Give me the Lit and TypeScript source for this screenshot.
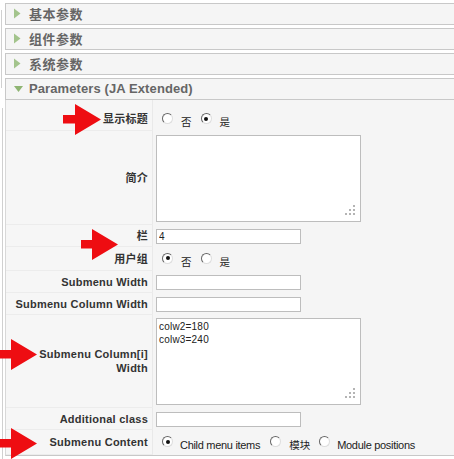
import { LitElement, html, css, svg } from "lit";
import { customElement } from "lit/decorators.js";

const grip = html`<svg class="grip" width="12" height="11" viewBox="0 0 12 11">
  <g fill="#b4b4b4">
    <rect x="9" y="0" width="2" height="2" />
    <rect x="5" y="4" width="2" height="2" />
    <rect x="9" y="4" width="2" height="2" />
    <rect x="1" y="8" width="2" height="2" />
    <rect x="5" y="8" width="2" height="2" />
    <rect x="9" y="8" width="2" height="2" />
  </g>
</svg>`;

const arrows = [
  { x: 63, y: 104, w: 38 },
  { x: 81, y: 229, w: 37 },
  { x: 0, y: 339, w: 37 },
  { x: 0, y: 428, w: 37 },
];

@customElement("app-root")
export class AppRoot extends LitElement {
  static styles = css`
    :host {
      display: block;
      width: 454px;
      height: 459px;
      overflow: hidden;
      background: #fff;
      position: relative;
      font-family: "Liberation Sans", "Noto Sans CJK SC", sans-serif;
    }
    .page { display: flex; height: 459px; }
    .rail { width: 5px; flex: none; display: flex; flex-direction: column; }
    .seg { width: 1px; margin-left: 2px; background: #d0d0d0; }
    .seg.one { margin-left: 1px; margin-top: 10px; height: 78px; }
    .seg.two { margin-top: 20px; flex: 1; }
    .main { flex: 1; padding-top: 3px; min-width: 0; }
    .bar {
      height: 20px;
      border: 1px solid #c8c8c8;
      border-right: 0;
      background: #f5f5f5;
      margin-bottom: 3px;
      display: flex;
      align-items: center;
      gap: 6px;
      padding-left: 8px;
      color: #666;
      font-size: 13px;
      font-weight: bold;
      letter-spacing: 0.5px;
      white-space: nowrap;
    }
    .bar span { margin-top: -2px; }
    .bar.open { margin-bottom: 0; letter-spacing: 0.1px; }
    .tri { width: 9px; height: 11px; flex: none; margin-top: -1px; }
    .panel {
      display: grid;
      grid-template-columns: 147px 1fr;
      grid-template-rows: 31px 94px 22px 24px 22px 22px 93px 22px 25px;
      background: #f5f5f5;
      border-left: 1px solid #d8d8d8;
      border-bottom: 1px solid #c8c8c8;
    }
    .key {
      background: #f6f6f6;
      border-right: 1px solid #e9e9e9;
      border-bottom: 1px solid #ececec;
      display: flex;
      align-items: center;
      justify-content: flex-end;
      text-align: right;
      padding-right: 4px;
      font-size: 11px;
      font-weight: bold;
      color: #333;
      line-height: 14px;
      letter-spacing: 0.25px;
    }
    .key.first { padding-top: 7px; }
    .val {
      display: flex;
      align-items: center;
      padding-left: 3px;
      font-size: 11px;
      color: #222;
    }
    .val.first { padding-top: 8px; }
    input.text {
      box-sizing: border-box;
      width: 145px;
      height: 15px;
      margin: 0;
      padding: 0 2px;
      border: 1px solid #bdbdbd;
      background: #fff;
      font: 10px "Liberation Sans", sans-serif;
      letter-spacing: 0.2px;
      color: #222;
      outline: none;
    }
    .area { position: relative; width: 205px; height: 87px; }
    textarea {
      box-sizing: border-box;
      display: block;
      width: 100%;
      height: 100%;
      margin: 0;
      padding: 1px 2px;
      border: 1px solid #bdbdbd;
      background: #fff;
      resize: none;
      overflow: hidden;
      font: 10px/13px "Liberation Sans", sans-serif;
      letter-spacing: 0.2px;
      color: #222;
      outline: none;
    }
    .grip { position: absolute; right: 5px; bottom: 6px; }
    .radios { display: flex; align-items: center; padding-left: 6px; }
    .radio {
      box-sizing: border-box;
      appearance: none;
      width: 11px;
      height: 11px;
      margin: 0;
      border-radius: 50%;
      border: 1px solid;
      border-color: #666 #ddd #ddd #666;
      background: #fff;
      transform: translateY(-1px);
      position: relative;
      flex: none;
    }
    .radio:checked::after {
      content: "";
      position: absolute;
      left: 2.5px;
      top: 2.5px;
      width: 4px;
      height: 4px;
      border-radius: 50%;
      background: #111;
    }
    .opt {
      margin-left: 7px;
      margin-right: 10px;
      transform: translateY(2px);
      white-space: nowrap;
      letter-spacing: -0.3px;
    }
    .opt.cjk { font-size: 10.5px; letter-spacing: 0; margin-left: 8px; margin-right: 9px; transform: translateY(2px); }
    .arrow { position: absolute; height: 31px; }
  `;

  private row(label: unknown, value: unknown, first = false) {
    return html`<div class="key ${first ? "first" : ""}"><span>${label}</span></div>
      <div class="val ${first ? "first" : ""}">${value}</div>`;
  }

  private radios(items: { t: string; on?: boolean; cjk?: boolean }[]) {
    return html`<div class="radios">
      ${items.map(
        (i) => html`<input class="radio" type="radio" .checked=${!!i.on} tabindex="-1" /><span
            class="opt ${i.cjk ? "cjk" : ""}"
            >${i.t}</span
          >`
      )}
    </div>`;
  }

  private bar(t: string, open = false) {
    return html`<div class="bar ${open ? "open" : ""}">
      <svg class="tri" viewBox="0 0 9 11">
        ${open
          ? svg`<path d="M0 3 H9 L4.5 9 Z" fill="#8fb573" />`
          : svg`<path d="M0 0.5 L6.5 5.5 L0 10.5 Z" fill="#a3c48c" />`}
      </svg>
      <span>${t}</span>
    </div>`;
  }

  render() {
    return html`
      <div class="page">
        <div class="rail"><div class="seg one"></div><div class="seg two"></div></div>
        <div class="main">
          ${this.bar("基本参数")} ${this.bar("组件参数")} ${this.bar("系统参数")}
          ${this.bar("Parameters (JA Extended)", true)}
          <div class="panel">
            ${this.row("显示标题", this.radios([{ t: "否", cjk: true }, { t: "是", on: true, cjk: true }]), true)}
            ${this.row("简介", html`<div class="area"><textarea tabindex="-1"></textarea>${grip}</div>`)}
            ${this.row("栏", html`<input class="text" value="4" tabindex="-1" />`)}
            ${this.row("用户组", this.radios([{ t: "否", on: true, cjk: true }, { t: "是", cjk: true }]))}
            ${this.row("Submenu Width", html`<input class="text" tabindex="-1" />`)}
            ${this.row("Submenu Column Width", html`<input class="text" tabindex="-1" />`)}
            ${this.row(
              html`Submenu Column[i]<br />Width`,
              html`<div class="area"><textarea tabindex="-1" .value=${"colw2=180\ncolw3=240"}></textarea>${grip}</div>`
            )}
            ${this.row("Additional class", html`<input class="text" tabindex="-1" />`)}
            ${this.row(
              "Submenu Content",
              this.radios([{ t: "Child menu items", on: true }, { t: "模块", cjk: true }, { t: "Module positions" }])
            )}
          </div>
        </div>
      </div>
      ${arrows.map(
        (a) => html`<svg class="arrow" style="left:${a.x}px;top:${a.y}px;width:${a.w}px" viewBox="0 0 ${a.w} 31">
          <path d="M0 11 H${a.w - 26} V0 L${a.w} 15.5 L${a.w - 26} 31 V19.5 H0 Z" fill="#ee0d12" />
        </svg>`
      )}
    `;
  }
}
